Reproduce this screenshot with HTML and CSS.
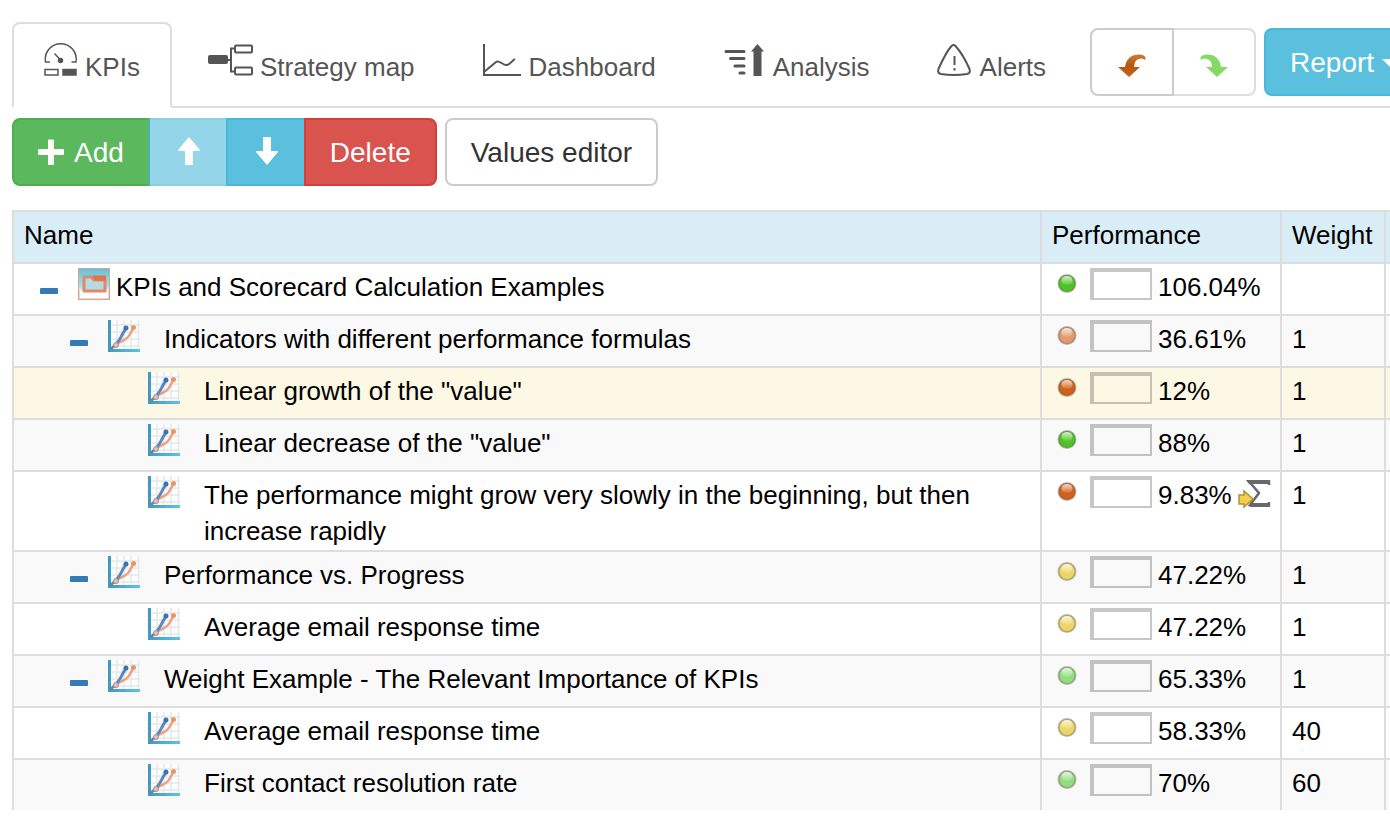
FILE: index.html
```html
<!DOCTYPE html>
<html lang="en">
<head>
<meta charset="utf-8">
<title>KPIs and Scorecard Calculation Examples</title>
<link rel="stylesheet" href="styles.css">
</head>
<body>
<svg class="defs" aria-hidden="true">
  <defs>
    <linearGradient id="axis" x1="0" y1="0" x2="1" y2="0"><stop offset="0" stop-color="#3f97bf"/><stop offset="1" stop-color="#5cc4e4"/></linearGradient>
    <linearGradient id="sky" x1="0" y1="0" x2="0" y2="1"><stop offset="0" stop-color="#62c0d8"/><stop offset=".6" stop-color="#b5dde6"/><stop offset=".75" stop-color="#fff"/></linearGradient>
    <linearGradient id="shine" x1="0" y1="0" x2="0" y2="1"><stop offset="0" stop-color="#fff" stop-opacity=".75"/><stop offset="1" stop-color="#fff" stop-opacity=".1"/></linearGradient>
    <linearGradient id="undo" x1="0" y1="0" x2="0" y2="1"><stop offset="0" stop-color="#cf7a3a"/><stop offset=".5" stop-color="#b4570f"/><stop offset="1" stop-color="#c96519"/></linearGradient>
    <symbol id="chart" viewBox="0 0 32 32">
      <rect width="32" height="32" fill="#fdfdfd"/>
      <path d="M9 0V29M16 0V29M23 0V29M30.500 0V29M3 5H32M3 12H32M3 19H32M3 26H32" stroke="#e3e8ea" stroke-width="1.500"/>
      <path d="M0 0H3V29H32V32H0Z" fill="url(#axis)"/>
      <path d="M3 29L9 23" stroke="#71818d" stroke-width="2.500"/>
      <path d="M7 26C12 20 16 22 20 17C23 13 24 11 26 7" fill="none" stroke="#eba27c" stroke-width="2.500"/>
      <path d="M6 27C10 21 12 20 14 15L18 8" fill="none" stroke="#5b87bd" stroke-width="3"/>
      <circle cx="8" cy="25" r="2.500" fill="#d8c4c4" stroke="#b08c8a"/>
      <circle cx="18" cy="8" r="2.500" fill="#3974b2"/><circle cx="25.500" cy="7.500" r="2.500" fill="#f09361"/>
    </symbol>
    <symbol id="minus" viewBox="0 0 30 36"><rect x="6" y="20" width="18" height="6" rx="1" fill="#337ab7"/></symbol>
    <symbol id="led" viewBox="0 0 32 32">
      <circle cx="15" cy="15.500" r="8.500" fill="currentColor" stroke="#6b6257" stroke-opacity=".45" stroke-width="2"/>
      <ellipse cx="15" cy="12.500" rx="5.500" ry="4.500" fill="url(#shine)"/>
    </symbol>
  </defs>
</svg>

<header class="topbar">
  <nav class="tabs">
    <a class="tab tab-active" href="#" aria-current="page">
      <svg width="34" height="32" viewBox="0 0 34 32" fill="none" stroke="#555" stroke-width="1.500"><path d="M6 18H1.500A15.500 15.500 0 1 1 32 18H27.500M10.500 9.500L17 16.500"/><circle cx="16.500" cy="16.500" r="2" fill="#555"/><rect x="1" y="25.500" width="13" height="5.500"/><rect x="19" y="25.500" width="13" height="5.500" fill="#555"/></svg>
      <span>KPIs</span></a>
    <a class="tab" href="#">
      <svg width="45" height="32" viewBox="0 0 45 32" fill="none" stroke="#555" stroke-width="2"><rect x="1" y="12" width="18" height="7" rx="1" fill="#555"/><path d="M19 16H23M27 4.500H23V27.500H27"/><rect x="27" y="1.500" width="17" height="7" rx="1"/><rect x="27" y="23.500" width="17" height="7" rx="1"/></svg>
      <span>Strategy map</span></a>
    <a class="tab" href="#">
      <svg width="39" height="32" viewBox="0 0 39 32" fill="none" stroke="#555" stroke-width="2"><path d="M1 0V31H38"/><path d="M1 28L13 18C16 15 20 22 24 21C27 20 29 17 32 15"/></svg>
      <span>Dashboard</span></a>
    <a class="tab" href="#">
      <svg width="42" height="32" viewBox="0 0 42 32" fill="none" stroke="#555" stroke-width="3"><path d="M2 7.500H20M6.500 14.500H20M11 22H20M16 29H20" stroke-linecap="round"/><path d="M33.500 0L40 7.500H37.500V32H29.500V7.500H27Z" fill="#555" stroke="none"/></svg>
      <span>Analysis</span></a>
    <a class="tab" href="#">
      <svg width="35" height="32" viewBox="2 0 35 32" fill="none" stroke="#555" stroke-width="2"><path d="M15.500 2Q17.500 0 19.500 2C25 8 30 17 33.500 25Q35 29 31 30Q17.500 32 5 30Q1 29 2.500 25C6 17 10 8 15.500 2Z"/><path d="M18.500 12V21M18.500 24V26.500"/></svg>
      <span>Alerts</span></a>
  </nav>
  <div class="actions">
    <div class="group">
      <button class="btn btn-plain btn-front" type="button" aria-label="Undo"><svg width="32" height="32" viewBox="0 0 32 32"><path d="M29.500 12Q30 8 24 7.500Q11 7 9 20H2L13 30L24 20H18Q18 12 25 11.500Q28 11.500 29.500 13Z" fill="url(#undo)"/></svg></button>
      <button class="btn btn-plain" type="button" aria-label="Redo" disabled><svg width="32" height="32" viewBox="0 0 32 32"><path d="M2.500 12Q2 8 8 7.500Q21 7 23 20H30L19 30L8 20H14Q14 12 7 11.500Q4 11.500 2.500 13Z" fill="#43c516"/></svg></button>
    </div>
    <button class="btn btn-info btn-round" type="button" aria-haspopup="true">Report<span class="caret"></span></button>
  </div>
</header>

<main class="content">
  <div class="toolbar">
    <div class="group">
      <button class="btn btn-success" type="button"><svg width="28" height="28" viewBox="0 0 28 28"><path d="M10 1.500Q10 .5 11 .5H15Q16 .5 16 1.500V10H25Q26 10 26 11V15Q26 16 25 16H16V25Q16 26 15 26H11Q10 26 10 25V16H1Q0 16 0 15V11Q0 10 1 10H10Z" fill="#fff"/></svg>Add</button>
      <button class="btn btn-info" type="button" aria-label="Move up" disabled><svg width="28" height="28" viewBox="0 0 28 28"><path d="M15 -2L26 11Q26 12 25 12H19V25Q19 26 18 26H12Q11 26 11 25V12H5Q4 12 4 11Z" fill="#fff"/></svg></button>
      <button class="btn btn-info" type="button" aria-label="Move down"><svg width="28" height="28" viewBox="0 0 28 28"><path d="M15 26L26 13Q26 12 25 12H19V-1Q19 -2 18 -2H12Q11 -2 11 -1V12H5Q4 12 4 13Z" fill="#fff"/></svg></button>
      <button class="btn btn-danger" type="button">Delete</button>
    </div>
    <button class="btn btn-plain btn-round" type="button">Values editor</button>
  </div>

  <table class="grid">
    <colgroup><col><col class="col-performance"><col class="col-weight"><col class="col-rest"></colgroup>
    <thead><tr><th scope="col">Name</th><th scope="col">Performance</th><th scope="col">Weight</th><td></td></tr></thead>
    <tbody>
      <tr>
        <td><div class="name level-0"><button class="toggle" type="button" aria-label="Collapse"><svg width="30" height="36"><use href="#minus"/></svg></button>
          <svg width="32" height="32" viewBox="0 0 32 32"><rect x=".5" y=".5" width="31" height="31" fill="url(#sky)" stroke="#c9a99b"/><path d="M1 22V31H31V22" fill="none" stroke="#e8a58c"/><path d="M6 9H13L16 12H27V23H6Z" fill="#b4dbe2" stroke="#e08a68" stroke-width="3" stroke-linejoin="round"/><path d="M14 7.500H28V12.500H17Z" fill="#df7349"/></svg>
          <span>KPIs and Scorecard Calculation Examples</span></div></td>
        <td><div class="perf"><svg class="led green" width="32" height="32"><use href="#led"/></svg><div class="bar"></div><span>106.04%</span></div></td><td></td><td></td>
      </tr>
      <tr>
        <td><div class="name level-1"><button class="toggle" type="button" aria-label="Collapse"><svg width="30" height="36"><use href="#minus"/></svg></button><svg width="32" height="32"><use href="#chart"/></svg><span>Indicators with different performance formulas</span></div></td>
        <td><div class="perf"><svg class="led peach" width="32" height="32"><use href="#led"/></svg><div class="bar"></div><span>36.61%</span></div></td><td>1</td><td></td>
      </tr>
      <tr class="selected">
        <td><div class="name level-2"><svg width="32" height="32"><use href="#chart"/></svg><span>Linear growth of the "value"</span></div></td>
        <td><div class="perf"><svg class="led orange" width="32" height="32"><use href="#led"/></svg><div class="bar"></div><span>12%</span></div></td><td>1</td><td></td>
      </tr>
      <tr>
        <td><div class="name level-2"><svg width="32" height="32"><use href="#chart"/></svg><span>Linear decrease of the "value"</span></div></td>
        <td><div class="perf"><svg class="led green" width="32" height="32"><use href="#led"/></svg><div class="bar"></div><span>88%</span></div></td><td>1</td><td></td>
      </tr>
      <tr>
        <td><div class="name level-2"><svg width="32" height="32"><use href="#chart"/></svg><span>The performance might grow very slowly in the beginning, but then increase rapidly</span></div></td>
        <td><div class="perf"><svg class="led orange" width="32" height="32"><use href="#led"/></svg><div class="bar"></div><span>9.83%</span><svg width="32" height="32" viewBox="0 0 32 32"><path d="M31 9V5.500H11L21 17L12 29H31V26" fill="none" stroke="#66686a" stroke-width="2.500"/><path d="M8 4H32V8H11Z" fill="#66686a"/><path d="M12 27H32V31H12Z" fill="#66686a"/><path d="M1 19H6V15L15 23L6 31V28H1Z" fill="#f0d04c" stroke="#b3913c" stroke-width="1.500"/></svg></div></td><td>1</td><td></td>
      </tr>
      <tr>
        <td><div class="name level-1"><button class="toggle" type="button" aria-label="Collapse"><svg width="30" height="36"><use href="#minus"/></svg></button><svg width="32" height="32"><use href="#chart"/></svg><span>Performance vs. Progress</span></div></td>
        <td><div class="perf"><svg class="led yellow" width="32" height="32"><use href="#led"/></svg><div class="bar"></div><span>47.22%</span></div></td><td>1</td><td></td>
      </tr>
      <tr>
        <td><div class="name level-2"><svg width="32" height="32"><use href="#chart"/></svg><span>Average email response time</span></div></td>
        <td><div class="perf"><svg class="led yellow" width="32" height="32"><use href="#led"/></svg><div class="bar"></div><span>47.22%</span></div></td><td>1</td><td></td>
      </tr>
      <tr>
        <td><div class="name level-1"><button class="toggle" type="button" aria-label="Collapse"><svg width="30" height="36"><use href="#minus"/></svg></button><svg width="32" height="32"><use href="#chart"/></svg><span>Weight Example - The Relevant Importance of KPIs</span></div></td>
        <td><div class="perf"><svg class="led lime" width="32" height="32"><use href="#led"/></svg><div class="bar"></div><span>65.33%</span></div></td><td>1</td><td></td>
      </tr>
      <tr>
        <td><div class="name level-2"><svg width="32" height="32"><use href="#chart"/></svg><span>Average email response time</span></div></td>
        <td><div class="perf"><svg class="led yellow" width="32" height="32"><use href="#led"/></svg><div class="bar"></div><span>58.33%</span></div></td><td>40</td><td></td>
      </tr>
      <tr>
        <td><div class="name level-2"><svg width="32" height="32"><use href="#chart"/></svg><span>First contact resolution rate</span></div></td>
        <td><div class="perf"><svg class="led lime" width="32" height="32"><use href="#led"/></svg><div class="bar"></div><span>70%</span></div></td><td>60</td><td></td>
      </tr>
    </tbody>
  </table>
</main>
</body>
</html>
```
FILE: styles.css
```css
* { box-sizing: border-box; }

body {
  margin: 0;
  padding: 22px 0 0 12px;
  overflow-x: hidden;
  background: #fff;
  color: #000;
  font: 26px/36px "Liberation Sans", Arial, sans-serif;
}

svg { flex: none; overflow: visible; }
.defs { position: absolute; width: 0; height: 0; }

/* Top bar */
.topbar {
  display: flex;
  gap: 12px;
  border-bottom: 2px solid #ddd;
}
.tabs { display: flex; flex: none; gap: 4px; margin-bottom: -2px; }
.tab {
  display: flex;
  align-items: baseline;
  gap: 7px;
  padding: 20px 30px 21px;
  border: 2px solid transparent;
  border-radius: 8px 8px 0 0;
  color: #555;
  text-decoration: none;
}
.tab-active { background: #fff; border-color: #ddd #ddd #fff; }
.actions { display: flex; flex: none; align-items: flex-start; gap: 8px; margin-top: 6px; }

/* Buttons */
.btn {
  display: flex;
  align-items: center;
  gap: 8px;
  padding: 13px 24px 11px;
  border: 2px solid;
  color: #fff;
  font: inherit;
  font-size: 28px;
  line-height: 40px;
  min-height: 68px;
}
.btn:disabled { opacity: .65; }
.btn-plain { background: #fff; border-color: #ccc; color: #333; }
.btn-success { background: #5cb85c; border-color: #4cae4c; }
.btn-info { background: #5bc0de; border-color: #46b8da; }
.btn-danger { background: #d9534f; border-color: #d43f3a; }
.btn-round { border-radius: 8px; }
.btn-front { z-index: 1; }
.group { display: flex; }
.group .btn + .btn { margin-left: -2px; }
.group .btn:first-child { border-radius: 8px 0 0 8px; }
.group .btn:last-child { border-radius: 0 8px 8px 0; }
.caret { border: 8px solid transparent; border-top-color: #fff; border-bottom: 0; }

.toolbar { display: flex; gap: 8px; margin: 10px 0 24px; }

/* KPI table */
.grid { width: 100%; table-layout: fixed; border-collapse: separate; border-spacing: 0; }
.col-performance { width: 240px; }
.col-weight { width: 104px; }
.col-rest { width: 6px; }
th, td {
  height: 52px;
  padding: 5px 10px 1px;
  border: 0 solid #ddd;
  border-width: 2px 0 0 2px;
  font-weight: normal;
  text-align: left;
  vertical-align: top;
}
th:last-child, td:last-child { padding: 0; }
thead { background: #d9edf7; }
tbody tr:nth-child(even) { background: #f9f9f9; }
tbody .selected { background: #fcf8e3; }

.name, .perf { display: flex; align-items: flex-start; }
.name > svg, .perf > svg, .toggle, .bar { margin-top: -1px; }
.name span { margin-left: 24px; }
.level-0 { padding-left: 10px; }
.level-0 span { margin-left: 6px; }
.level-1 { padding-left: 40px; }
.level-2 { padding-left: 124px; }
.toggle { display: flex; margin-right: 14px; padding: 0; border: 0; background: none; }

.perf { gap: 6px; }
.bar {
  flex: none;
  width: 62px;
  height: 32px;
  border: solid rgba(0, 0, 0, .22);
  border-width: 4px 2px 2px 4px;
}
.green { color: #4cc423; }
.lime { color: #92dd7e; }
.yellow { color: #ecd667; }
.peach { color: #e39a6c; }
.orange { color: #d2601a; }
```
